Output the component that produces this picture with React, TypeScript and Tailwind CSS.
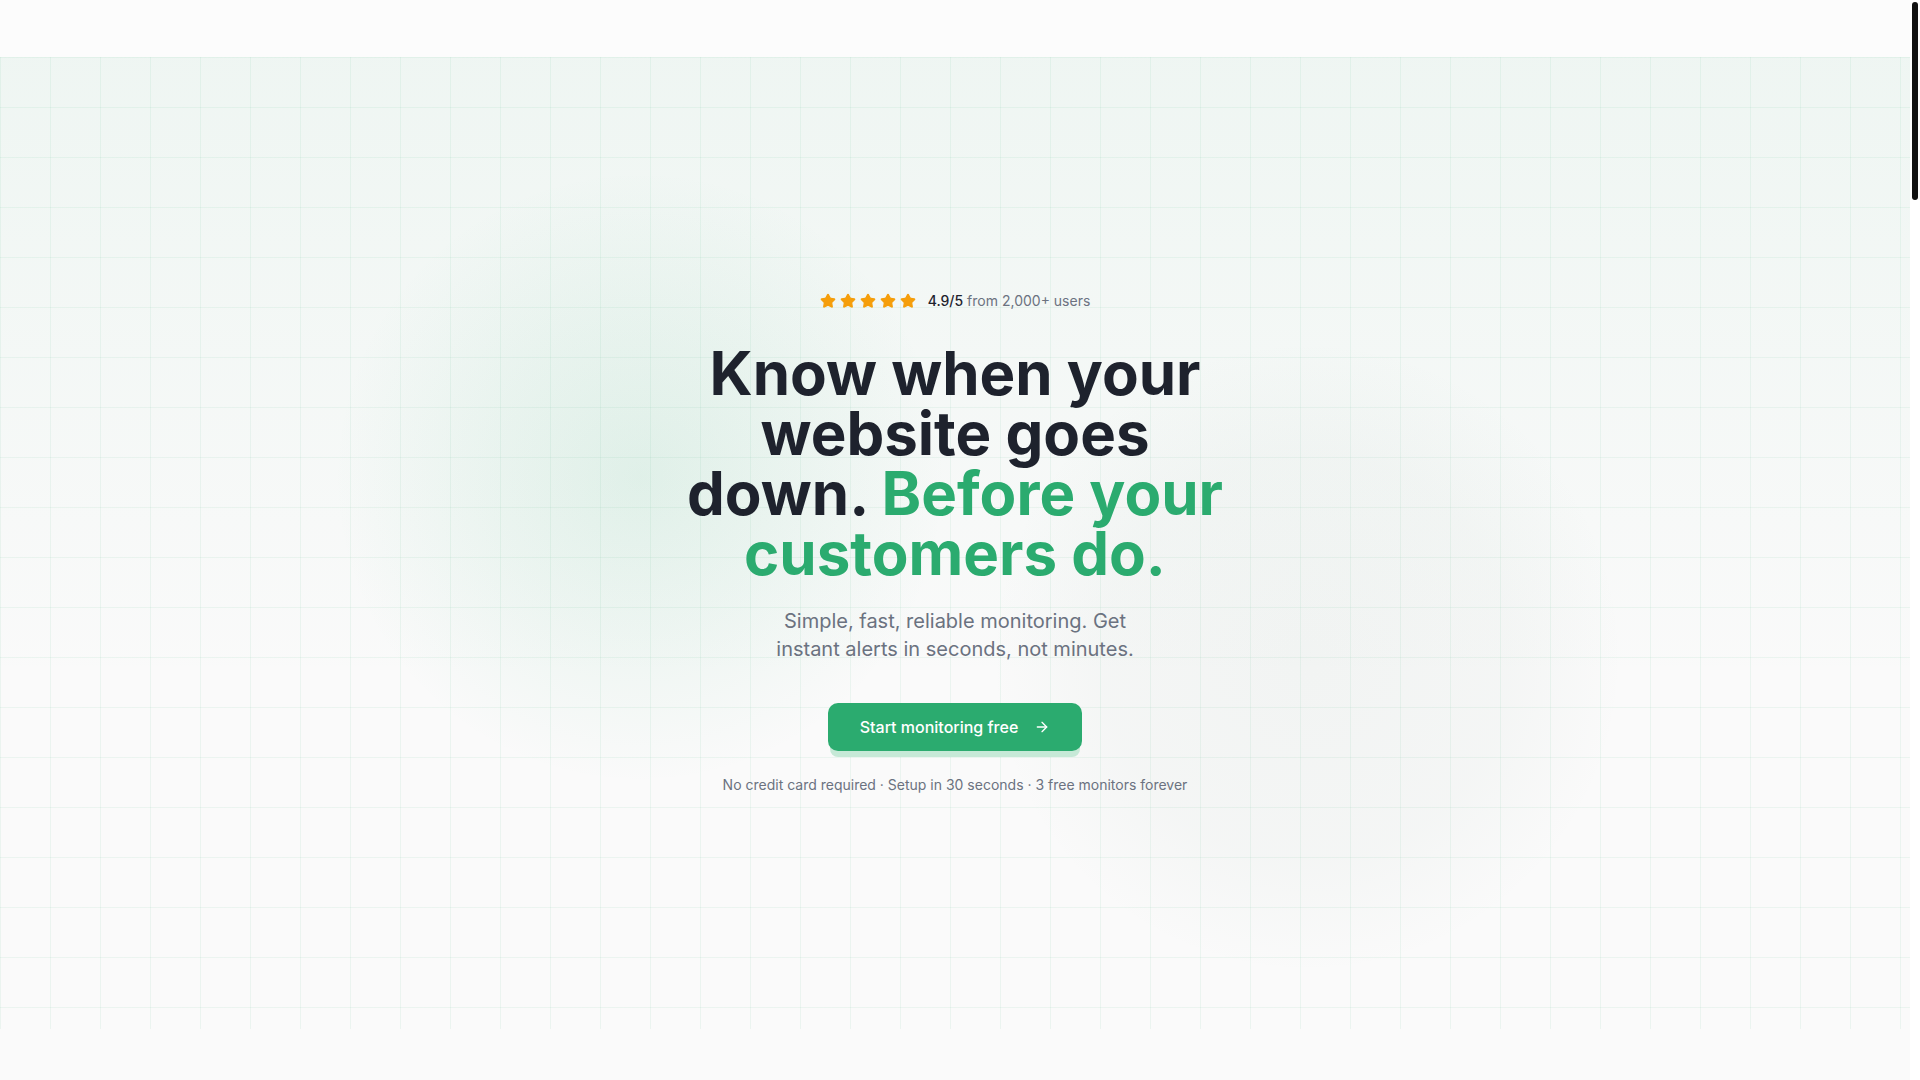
import { ArrowRight, Star } from "lucide-react";

const font = { fontFamily: "Inter, 'Noto Sans', sans-serif" };

function Rating() {
  return (
    <div className="flex h-5 items-center justify-center gap-3 text-sm">
      <div className="flex items-center gap-1">
        {[0, 1, 2, 3, 4].map((i) => (
          <Star key={i} className="h-4 w-4 fill-[#f59e0b] text-[#f59e0b]" />
        ))}
      </div>
      <span>
        <span className="font-medium text-[#1e222d]">4.9/5</span>{" "}
        <span className="text-[#6b7280]">from 2,000+ users</span>
      </span>
    </div>
  );
}

function Hero() {
  return (
    <section className="relative flex h-[972px] items-center justify-center overflow-hidden bg-[#fafafa]">
      {/* tint + grid */}
      <div className="absolute inset-0 bg-[linear-gradient(to_bottom,rgba(43,171,111,0.055),rgba(43,171,111,0)_65%)]" />
      <div className="absolute inset-0 bg-[linear-gradient(to_right,rgba(43,171,111,0.07)_1px,transparent_1px),linear-gradient(to_bottom,rgba(43,171,111,0.07)_1px,transparent_1px)] bg-[size:50px_50px]" />
      {/* glows */}
      <div className="absolute left-[330px] top-[110px] h-[620px] w-[620px] rounded-full bg-[radial-gradient(circle,rgba(43,171,111,0.11)_0%,rgba(43,171,111,0.06)_35%,rgba(43,171,111,0)_70%)]" />
      <div className="absolute left-[987px] top-[280px] h-[640px] w-[640px] rounded-full bg-[radial-gradient(circle,rgba(90,130,110,0.05)_0%,rgba(90,130,110,0.035)_45%,rgba(90,130,110,0)_70%)]" />

      <div className="relative flex flex-col items-center text-center">
        <Rating />
        <h1 className="mt-8 max-w-xl text-[60px] font-bold leading-[60px] text-balance text-[#1e222d]">
          Know when your website goes down.{" "}
          <span className="text-[#2bab6f]">Before your customers do.</span>
        </h1>
        <p className="mt-6 max-w-sm text-xl leading-7 text-[#6b7280]">
          Simple, fast, reliable monitoring. Get instant alerts in seconds, not minutes.
        </p>
        <button className="mt-10 flex h-12 items-center gap-4 rounded-[10px] bg-[#2bab6f] px-8 text-base font-medium text-white shadow-[0_8px_0_-2px_#c6e9d7]">
          Start monitoring free
          <ArrowRight className="h-4 w-4" />
        </button>
        <p className="mt-6 text-sm leading-5 text-[#6b7280]">
          No credit card required · Setup in 30 seconds · 3 free monitors forever
        </p>
      </div>
    </section>
  );
}

export default function App() {
  return (
    <div style={font} className="flex h-screen overflow-hidden bg-[#fafafa]">
      <main className="flex min-w-0 flex-1 flex-col">
        <header className="h-[57px] shrink-0 bg-[#fcfcfc]" />
        <Hero />
        <div className="flex-1 bg-[#fafafa]" />
      </main>
      {/* page scrollbar */}
      <aside className="w-[10px] shrink-0 bg-white px-[2px] pt-[2px]">
        <div className="h-[198px] w-[6px] rounded-full bg-[#111]" />
      </aside>
    </div>
  );
}
